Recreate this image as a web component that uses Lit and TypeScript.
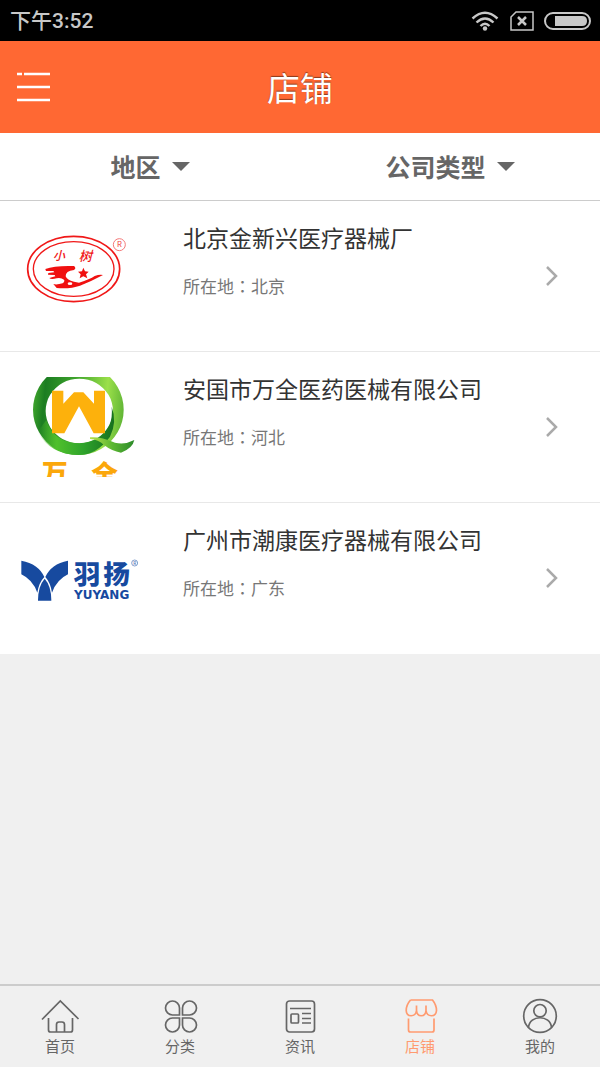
import { LitElement, html, css, svg, TemplateResult } from "lit";
import { customElement, property, state } from "lit/decorators.js";
import { classMap } from "lit/directives/class-map.js";

interface Shop {
  name: string;
  place: string;
  logo: TemplateResult;
}

interface Tab {
  label: string;
  icon: TemplateResult;
}

const oldTreeLogo = html`
  <svg viewBox="60 33 360 300" role="img" aria-label="小树">
    <g fill="none" stroke="#f01818">
      <ellipse cx="221" cy="162" rx="138" ry="98" stroke-width="5" />
      <ellipse cx="221" cy="162" rx="121" ry="82" stroke-width="4" />
      <circle cx="358" cy="89" r="18" stroke="#f47a7a" stroke-width="3" />
    </g>
    <text class="mark" x="358" y="97" font-size="23" fill="#f04040">R</text>
    <text class="brush" x="177" y="136" font-size="36" fill="#f01818">小</text>
    <text class="brush" x="256" y="137" font-size="40" fill="#f01818">树</text>
    <g fill="#f01010">
      <path
        d="M136 162 Q165 151 222 153 Q230 160 222 165 Q196 168 197 184 Q201 196 222 200 L237 203 Q270 193 284 183 Q298 178 309 180 Q276 198 240 212 Q212 222 170 219 L160 207 Q170 210 188 205 Q194 202 193 195 Q183 187 170 190 Q152 194 148 189 L166 184 L164 180 L144 179 L145 174 L163 172 L160 168 L138 168Z"
      />
      <path d="M250 158l5 11 11 1-8 8 4 12-12-6-11 6 3-12-8-8 12-1z" />
    </g>
    <ellipse cx="210" cy="206" rx="7" ry="4" fill="#fff" />
  </svg>
`;

const wanquanLogo = html`
  <svg viewBox="60 36 360 300" role="img" aria-label="万全">
    <defs>
      <linearGradient id="ring" x1="0" y1="0.4" x2="1" y2="0.5">
        <stop offset="0" stop-color="#3fa52c" />
        <stop offset="0.12" stop-color="#1c7d22" />
        <stop offset="0.45" stop-color="#3fa52c" />
        <stop offset="0.8" stop-color="#9be04a" />
        <stop offset="1" stop-color="#62b636" />
      </linearGradient>
      <linearGradient id="low" x1="0" y1="0" x2="1" y2="0">
        <stop offset="0" stop-color="#4fc02c" stop-opacity="0" />
        <stop offset="0.25" stop-color="#4fc02c" />
        <stop offset="0.6" stop-color="#2ea32b" />
        <stop offset="1" stop-color="#17701f" />
      </linearGradient>
      <linearGradient id="tail" x1="0" y1="0" x2="1" y2="0">
        <stop offset="0" stop-color="#b4e04a" />
        <stop offset="0.5" stop-color="#5db832" />
        <stop offset="1" stop-color="#2c8a2a" />
      </linearGradient>
    </defs>
    <path
      fill="url(#ring)"
      fill-rule="evenodd"
      d="M235 -2A136 136 0 1 0 235.100 -2ZM238 41A101 97 0 1 1 237.900 41Z"
    />
    <path
      fill="url(#low)"
      d="M139 165Q162 235 238 235Q300 232 328 180Q338 160 335 125Q352 170 330 215Q290 270 235 270Q150 268 113 200Z"
    />
    <path fill="url(#tail)" d="M270 217Q300 214 345 233Q375 240 403 225Q398 250 363 263Q335 258 312 240Q295 224 270 222Z" />
    <path fill="#fdb10c" d="M156 77H190V116L222 82H250L282 116V77H315V205H281L237 124L193 205H156Z" />
    <text class="mark heavy" x="164" y="354" font-size="78" fill="#fba70b">万</text>
    <text class="mark heavy" x="314" y="358" font-size="80" fill="#fba70b">全</text>
  </svg>
`;

const yuyangLogo = html`
  <svg viewBox="60 -36 360 300" role="img" aria-label="羽扬 YUYANG">
    <g fill="#174a9f">
      <path d="M64 62Q116 72 133 111Q117 127 112 158Q98 119 64 103Z" />
      <path d="M204 62Q153 72 136 111Q151 127 156 158Q170 119 204 103Z" />
      <path d="M134 116Q154 138 154 182H114Q114 138 134 116Z" />
    </g>
    <text class="mark heavy" x="261" y="133" font-size="80" fill="#174a9f">羽</text>
    <text class="mark heavy" x="350" y="133" font-size="80" fill="#174a9f">扬</text>
    <text class="latin" x="305" y="178" font-size="36" fill="#174a9f">YUYANG</text>
    <circle cx="404" cy="69" r="9" fill="none" stroke="#4a72b5" stroke-width="2" />
    <text class="mark" x="404" y="74" font-size="14" fill="#174a9f">R</text>
  </svg>
`;

const shops: Shop[] = [
  { name: "北京金新兴医疗器械厂", place: "北京", logo: oldTreeLogo },
  { name: "安国市万全医药医械有限公司", place: "河北", logo: wanquanLogo },
  { name: "广州市潮康医疗器械有限公司", place: "广东", logo: yuyangLogo },
];

const tabs: Tab[] = [
  {
    label: "首页",
    icon: svg`<path d="M2 21.500L20.300 3L38.500 21"/><path d="M8.500 20V32Q8.500 34 10.500 34H30.500Q32.500 34 32.500 32V20M16.500 34V26.500Q16.500 24 19 24H22Q24.500 24 24.500 26.500V34"/>`,
  },
  {
    label: "分类",
    icon: svg`<path d="M19.500 17H12.500A7 7 0 1 1 19.500 10ZM22.500 17V10A7 7 0 1 1 29.500 17ZM19.500 20V27A7 7 0 1 1 12.500 20ZM22.500 20H29.500A7 7 0 1 1 22.500 27Z"/>`,
  },
  {
    label: "资讯",
    icon: svg`<rect x="6.500" y="3" width="28" height="31" rx="3"/><path d="M10 10.500H31M22 15.500H31M22 20.500H31M22 25H31"/><rect x="11" y="16" width="7.500" height="9" rx="1"/>`,
  },
  {
    label: "店铺",
    icon: svg`<path d="M10.500 2H32.500Q36.500 7 36.500 12.500C36 19.500 27 19.500 26 12.500V7.500M10.500 2Q6.200 7 6.200 12.500C6.500 19.500 15.500 19.500 16.500 12.500V7.500M16.500 12.500C17 19.500 25.500 19.500 26 12.500"/><path d="M8.500 20.500V32Q8.500 34 10.500 34H32Q34 34 34 32V20.500"/>`,
  },
  {
    label: "我的",
    icon: svg`<circle cx="20" cy="18" r="16.300"/><circle cx="20" cy="12.700" r="6.200"/><path d="M8.500 29.500C9.500 16.500 30.500 16.500 31.500 29.500"/>`,
  },
];

@customElement("status-bar")
class StatusBar extends LitElement {
  static styles = css`
    :host {
      display: flex;
      align-items: center;
      justify-content: space-between;
      height: 41px;
      padding: 0 9px 0 10px;
      background: #000;
      color: #c8c8c8;
      font: 500 20px/24px Roboto, "Noto Sans CJK SC", sans-serif;
    }
    .clock {
      font-size: 21px;
    }
    .signals {
      display: flex;
      align-items: center;
      gap: 10px;
    }
    svg {
      display: block;
      fill: none;
      stroke: currentColor;
    }
  `;

  render() {
    return html`
      <time class="clock">下午3:52</time>
      <div class="signals">
        <svg width="30" height="22" viewBox="0 0 30 22" stroke-width="2.400">
          <path d="M2.500 8.500Q15 -3 27.500 8.500M6.500 12.500Q15 4.500 23.500 12.500M10.500 16Q15 11.500 19.500 16" />
          <circle cx="15" cy="18.500" r="2.200" fill="currentColor" stroke="none" />
        </svg>
        <svg width="24" height="20" viewBox="0 0 24 20" stroke-width="1.500">
          <path d="M6 1H23V19H1V6Z" />
          <path d="M8 6L16 14M16 6L8 14" stroke-width="2.500" />
        </svg>
        <svg width="47" height="18" viewBox="0 0 47 18">
          <rect x="1" y="1" width="45" height="16" rx="8" stroke-width="2" />
          <path d="M11 4H38Q43 4 43 9T38 14H11Z" fill="currentColor" stroke="none" />
        </svg>
      </div>
    `;
  }
}

@customElement("shop-row")
class ShopRow extends LitElement {
  @property({ attribute: false }) shop!: Shop;

  static styles = css`
    :host {
      display: block;
    }
    .row {
      display: grid;
      grid-template-columns: 120px 1fr auto;
      align-items: center;
      padding: 25px 42px 25px 20px;
      color: inherit;
      text-decoration: none;
    }
    .logo svg {
      display: block;
      width: 120px;
      height: 100px;
    }
    .mark,
    .latin,
    .brush {
      text-anchor: middle;
      font-family: "Noto Sans CJK SC", sans-serif;
    }
    .brush {
      font-weight: 500;
      font-style: italic;
    }
    .heavy {
      font-weight: 900;
    }
    .latin {
      font-family: "DejaVu Sans", sans-serif;
      font-weight: 700;
    }
    .info {
      align-self: start;
      display: grid;
      gap: 27px;
      padding-left: 43px;
      line-height: 22px;
    }
    .name {
      margin: 0;
      color: #333;
      font-size: 23px;
      font-weight: 400;
    }
    .place {
      margin: 0;
      color: #777;
      font-size: 17px;
    }
    .colon {
      font-family: "Noto Sans CJK TC", sans-serif;
    }
    .chevron {
      display: block;
      fill: none;
      stroke: #aaa;
      stroke-width: 2.5;
    }
  `;

  render() {
    return html`
      <a class="row" href="#shop">
        <span class="logo">${this.shop.logo}</span>
        <div class="info">
          <h2 class="name">${this.shop.name}</h2>
          <p class="place">所在地<span class="colon" lang="zh-TW">：</span>${this.shop.place}</p>
        </div>
        <svg class="chevron" width="12" height="20" viewBox="0 0 12 20" aria-hidden="true">
          <path d="M1 1L10 10L1 19" />
        </svg>
      </a>
    `;
  }
}

@customElement("app-root")
class AppRoot extends LitElement {
  @state() private active = "店铺";

  static styles = css`
    :host {
      display: flex;
      flex-direction: column;
      min-height: 100vh;
      background: #f0f0f0;
      font-family: "Noto Sans CJK SC", sans-serif;
    }
    .header {
      display: grid;
      grid-template-columns: 50px 1fr 50px;
      align-items: center;
      height: 92px;
      background: #ff6833;
      color: #fff;
    }
    .title {
      margin: 0;
      font-size: 33px;
      font-weight: 400;
      line-height: 48px;
      text-align: center;
      text-shadow: 0 -1px 1px #8a3a1c;
    }
    button {
      padding: 0;
      border: 0;
      background: none;
      color: inherit;
      font: inherit;
    }
    .menu {
      padding-left: 17px;
    }
    .menu svg {
      display: block;
    }
    .filters {
      display: grid;
      grid-template-columns: 1fr 1fr;
      height: 67px;
      background: #fff;
      border-bottom: 1px solid #ccc;
      color: #666;
    }
    .filter {
      display: grid;
      place-content: center;
      align-items: center;
    }
    .filter select,
    .filter svg {
      grid-area: 1 / 1;
    }
    .filter select {
      appearance: none;
      margin: 0;
      padding: 0 28px 2px 0;
      border: 0;
      background: none;
      color: inherit;
      font: 700 25px/36px "Noto Sans CJK SC", sans-serif;
    }
    .filter svg {
      justify-self: end;
      fill: currentColor;
      pointer-events: none;
    }
    .list {
      flex: 1;
      margin: 0;
      padding: 0;
      list-style: none;
    }
    .item {
      background: #fff;
      border-bottom: 1px solid #e8e8e8;
    }
    .item:last-child {
      border-color: #fff;
    }
    .tabs {
      position: sticky;
      bottom: 0;
      display: grid;
      grid-template-columns: repeat(5, 1fr);
      height: 81px;
      border-top: 2px solid #ccc;
      background: #f0f0f0;
    }
    .tab {
      display: flex;
      flex-direction: column;
      align-items: center;
      padding-top: 12px;
      color: #666;
      font-size: 15px;
      line-height: 24px;
    }
    .tab svg {
      fill: none;
      stroke: currentColor;
      stroke-width: 1.7;
    }
    .active {
      color: #ff9b70;
    }
  `;

  private filter(label: string, choices: string[]) {
    return html`
      <label class="filter">
        <select aria-label=${label}>
          <option>${label}</option>
          ${choices.map((c) => html`<option>${c}</option>`)}
        </select>
        <svg width="18" height="10" viewBox="0 0 18 10" aria-hidden="true"><path d="M0 0H18L9 9Z" /></svg>
      </label>
    `;
  }

  render() {
    return html`
      <status-bar></status-bar>
      <header class="header">
        <button class="menu" aria-label="菜单">
          <svg width="33" height="30" viewBox="0 0 33 30" stroke="#fff" stroke-width="2.500">
            <path d="M0 2H5M7 2H33M0 15H33M0 28H33" />
          </svg>
        </button>
        <h1 class="title">店铺</h1>
      </header>
      <div class="filters">
        ${this.filter("地区", ["北京", "河北", "广东"])} ${this.filter("公司类型", ["生产企业", "经销企业"])}
      </div>
      <ul class="list">
        ${shops.map((shop) => html`<li class="item"><shop-row .shop=${shop}></shop-row></li>`)}
      </ul>
      <nav class="tabs">
        ${tabs.map(
          (tab) => html`
            <button
              class=${classMap({ tab: true, active: tab.label === this.active })}
              @click=${() => (this.active = tab.label)}
            >
              <svg width="40" height="36" viewBox="0 0 40 36" aria-hidden="true">${tab.icon}</svg>
              ${tab.label}
            </button>
          `
        )}
      </nav>
    `;
  }
}
